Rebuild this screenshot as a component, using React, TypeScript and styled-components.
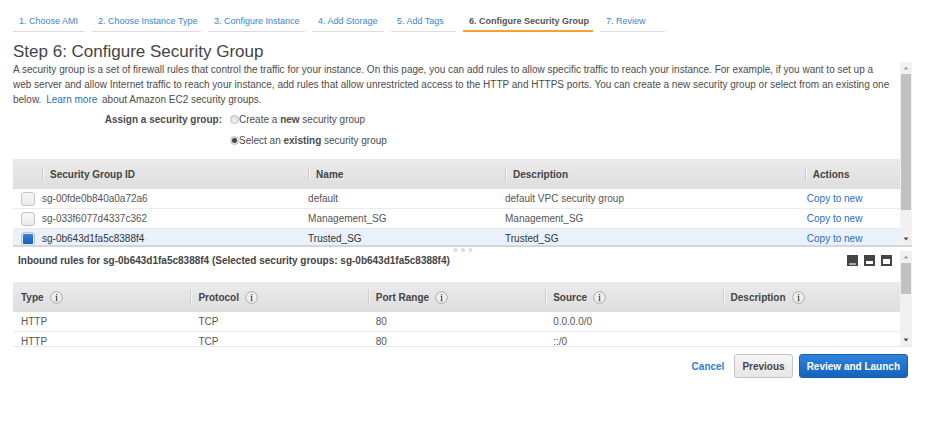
import React, { useState } from "react";
import styled, { createGlobalStyle, css } from "styled-components";

const GlobalStyle = createGlobalStyle`
  *, *::before, *::after { box-sizing: border-box; }
  body {
    margin: 0;
    background: #fff;
    color: #4c4c4c;
    font: 10px/15px "Liberation Sans", Arial, sans-serif;
  }
`;

const Page = styled.div`
  padding: 10px 21px 16px 13px;
`;

const Steps = styled.nav`
  display: flex;
  gap: 7px;
`;

const Step = styled.a<{ $active?: boolean; $width: number }>`
  flex: 0 0 ${(p) => p.$width}px;
  min-width: 0;
  height: 22px;
  padding-left: 6px;
  border-bottom: 1px solid #ddd;
  color: #3a86c8;
  font-size: 9px;
  line-height: 22px;
  text-decoration: none;
  white-space: nowrap;
  ${(p) =>
    p.$active &&
    css`
      border-bottom: 2px solid #f5a030;
      color: #555;
      font-weight: bold;
    `}
`;

const Title = styled.h1`
  margin: 9px 0 0;
  color: #444;
  font-size: 17px;
  font-weight: normal;
  line-height: 21px;
`;

const Pane = styled.section<{ $height: number; $edge: string }>`
  display: flex;
  height: ${(p) => p.$height}px;
  border-bottom: ${(p) => p.$edge};
`;

const PaneBody = styled.div`
  flex: 1;
  min-width: 0;
  overflow: hidden;
`;

const Track = styled.div`
  display: flex;
  flex: 0 0 12px;
  flex-direction: column;
  background: #f1f1f1;
`;

const ScrollButton = styled.button`
  display: flex;
  flex: 0 0 12px;
  align-items: center;
  justify-content: center;
  padding: 0;
  border: 0;
  background: none;
`;

const Thumb = styled.div<{ $height: number }>`
  height: ${(p) => p.$height}px;
  margin: 0 1px;
  background: #c1c1c1;
`;

const Spacer = styled.div`
  flex: 1;
`;

function ScrollBar({ thumb }: { thumb: number }) {
  return (
    <Track>
      <ScrollButton aria-label="Scroll up">
        <svg width="6" height="4" viewBox="0 0 6 4">
          <path d="M0.5 3.5 3 0.5 5.5 3.5z" fill="#a3a3a3" />
        </svg>
      </ScrollButton>
      <Thumb $height={thumb} />
      <Spacer />
      <ScrollButton aria-label="Scroll down">
        <svg width="6" height="4" viewBox="0 0 6 4">
          <path d="M0.5 0.5 3 3.5 5.5 0.5z" fill="#505050" />
        </svg>
      </ScrollButton>
    </Track>
  );
}

const Intro = styled.p`
  margin: 0;
`;

const Link = styled.a`
  color: #1f70c1;
  text-decoration: none;
`;

const InlineLink = styled(Link)`
  margin: 0 2px;
`;

const Assign = styled.div`
  display: grid;
  grid-template-columns: 209px 1fr;
  column-gap: 8px;
  margin: 5px 0 11px;
`;

const AssignLabel = styled.div`
  font-weight: bold;
  line-height: 15px;
  text-align: right;
`;

const Options = styled.div`
  display: grid;
  gap: 6px;
`;

const Option = styled.label`
  display: flex;
  align-items: center;
  white-space: pre;
`;

const Radio = styled.input`
  width: 9px;
  height: 9px;
  margin: 0;
  border: 1px solid #bbb;
  border-radius: 50%;
  appearance: none;
  background: linear-gradient(#ddd, #f4f4f4);
  &:checked {
    background: radial-gradient(circle, #444 0 2px, #e4e4e4 3px);
  }
`;

const Table = styled.table`
  width: 100%;
  border-collapse: separate;
  border-spacing: 0;
  table-layout: fixed;
`;

const Col = styled.col<{ $width?: string }>`
  width: ${(p) => p.$width ?? "auto"};
`;

const HeadRow = styled.tr`
  height: 30px;
  background: linear-gradient(#ebebeb, #dedede);
`;

const Head = styled.th`
  padding: 0;
  color: #444;
  font-weight: bold;
  text-align: left;
  vertical-align: middle;
`;

const HeadInner = styled.div<{ $line?: boolean }>`
  display: flex;
  align-items: center;
  gap: 6px;
  height: 14px;
  padding-left: ${(p) => (p.$line ? 7 : 8)}px;
  ${(p) =>
    p.$line &&
    css`
      border-left: 1px solid #ccc;
      box-shadow: inset 1px 0 #f6f6f6;
    `}
`;

const InfoButton = styled.button`
  display: flex;
  padding: 0;
  border: 0;
  background: none;
`;

const Row = styled.tr<{ $selected?: boolean }>`
  color: ${(p) => (p.$selected ? "#333" : "#555")};
  background: ${(p) => (p.$selected ? "#e9f1fd" : "#fff")};
`;

const Cell = styled.td<{ $indent: number }>`
  height: 20px;
  padding: 0 0 0 ${(p) => p.$indent}px;
  border-bottom: 1px solid #e9edf0;
  line-height: 14px;
  vertical-align: middle;
`;

const Check = styled.input`
  display: block;
  width: 14px;
  height: 14px;
  margin: 0;
  padding: 1px;
  border: 1px solid #c6c6c6;
  border-radius: 3px;
  appearance: none;
  background: linear-gradient(#f7f7f7, #ebebeb);
  &:checked {
    background: linear-gradient(#3184dc, #1162b8) content-box, #e6e6e6;
  }
`;

const Grip = styled.div`
  display: flex;
  justify-content: center;
  height: 4px;
  padding-top: 1px;
`;

const GripDots = styled.svg`
  overflow: visible;
`;

const RulesBar = styled.header`
  display: flex;
  align-items: flex-start;
  justify-content: space-between;
  height: 31px;
  padding: 3px 8px 0 5px;
`;

const RulesTitle = styled.h2`
  margin: 0;
  color: #444;
  font-size: 10px;
  font-weight: bold;
  line-height: 14px;
`;

const Layouts = styled.div`
  display: flex;
  gap: 6px;
  padding-top: 1px;
`;

const LayoutButton = styled.button`
  display: flex;
  padding: 0;
  border: 0;
  background: none;
`;

const Footer = styled.footer`
  display: flex;
  align-items: center;
  justify-content: flex-end;
  gap: 6px;
  padding: 7px 4px 0 0;
`;

const Cancel = styled.a`
  margin-right: 4px;
  color: #2a7fd4;
  font-weight: bold;
  text-decoration: none;
`;

const Button = styled.button<{ $primary?: boolean }>`
  height: 24px;
  padding: 0 7px;
  border: 1px solid ${(p) => (p.$primary ? "#1560ae" : "#c4c4c4")};
  border-radius: 3px;
  background: ${(p) =>
    p.$primary ? "linear-gradient(#2f83da, #1463ba)" : "linear-gradient(#f6f6f6, #e6e6e6)"};
  color: ${(p) => (p.$primary ? "#fff" : "#444")};
  font: bold 10px "Liberation Sans", Arial, sans-serif;
  white-space: nowrap;
`;

function Info({ about }: { about: string }) {
  return (
    <InfoButton aria-label={`About ${about}`}>
      <svg width="13" height="13" viewBox="0 0 13 13" fill="none">
        <circle cx="6.5" cy="6.5" r="5.8" fill="#efefef" stroke="#aaa" />
        <path d="M5.4 5.3h1.1v4.4M5.4 9.7h2.2" stroke="#666" strokeWidth="0.8" />
        <rect x="6" y="5" width="1.2" height="5" fill="#555" />
        <rect x="6" y="3" width="1.2" height="1.2" fill="#555" />
      </svg>
    </InfoButton>
  );
}

const steps = [
  { label: "1. Choose AMI", width: 72 },
  { label: "2. Choose Instance Type", width: 109 },
  { label: "3. Configure Instance", width: 97 },
  { label: "4. Add Storage", width: 72 },
  { label: "5. Add Tags", width: 65 },
  { label: "6. Configure Security Group", width: 130 },
  { label: "7. Review", width: 65 },
];

const groups = [
  { id: "sg-00fde0b840a0a72a6", name: "default", description: "default VPC security group" },
  { id: "sg-033f6077d4337c362", name: "Management_SG", description: "Management_SG" },
  { id: "sg-0b643d1fa5c8388f4", name: "Trusted_SG", description: "Trusted_SG" },
];

const ruleColumns = ["Type", "Protocol", "Port Range", "Source", "Description"];

const rules = [
  ["HTTP", "TCP", "80", "0.0.0.0/0", ""],
  ["HTTP", "TCP", "80", "::/0", ""],
];

const layouts = [
  { name: "Collapse rules", y: 8, height: 2, fill: "#aaa" },
  { name: "Split view", y: 6, height: 3, fill: "#fff" },
  { name: "Expand rules", y: 4, height: 5, fill: "#fff" },
];

export default function App() {
  const [selected, setSelected] = useState(groups[2].id);
  return (
    <>
      <GlobalStyle />
      <Page>
        <Steps aria-label="Launch steps">
          {steps.map((s, i) => (
            <Step key={s.label} href="#" $width={s.width} $active={i === 5}>
              {s.label}
            </Step>
          ))}
        </Steps>
        <Title>Step 6: Configure Security Group</Title>
        <Pane $height={185} $edge="2px solid #d3d7dc">
          <PaneBody>
            <Intro>
              A security group is a set of firewall rules that control the traffic for your instance. On this page, you
              can add rules to allow specific traffic to reach your instance. For example, if you want to set up a
              <br />
              web server and allow Internet traffic to reach your instance, add rules that allow unrestricted access to
              the HTTP and HTTPS ports. You can create a new security group or select from an existing one below.{" "}
              <InlineLink href="#">Learn more</InlineLink> about Amazon EC2 security groups.
            </Intro>
            <Assign role="radiogroup" aria-labelledby="assign">
              <AssignLabel id="assign">Assign a security group:</AssignLabel>
              <Options>
                <Option>
                  <Radio type="radio" name="assign" />
                  Create a <b>new</b> security group
                </Option>
                <Option>
                  <Radio type="radio" name="assign" defaultChecked />
                  Select an <b>existing</b> security group
                </Option>
              </Options>
            </Assign>
            <Table>
              <colgroup>
                <Col $width="29px" />
                <Col $width="30%" />
                <Col $width="22.2%" />
                <Col $width="33.8%" />
                <Col />
              </colgroup>
              <thead>
                <HeadRow>
                  <Head />
                  {["Security Group ID", "Name", "Description", "Actions"].map((h) => (
                    <Head key={h}>
                      <HeadInner $line>{h}</HeadInner>
                    </Head>
                  ))}
                </HeadRow>
              </thead>
              <tbody>
                {groups.map((g) => (
                  <Row key={g.id} $selected={g.id === selected}>
                    <Cell $indent={8}>
                      <Check
                        type="checkbox"
                        aria-label={g.id}
                        checked={g.id === selected}
                        onChange={() => setSelected(g.id)}
                      />
                    </Cell>
                    <Cell $indent={0}>{g.id}</Cell>
                    <Cell $indent={0}>{g.name}</Cell>
                    <Cell $indent={0}>{g.description}</Cell>
                    <Cell $indent={2}>
                      <Link href="#">Copy to new</Link>
                    </Cell>
                  </Row>
                ))}
              </tbody>
            </Table>
          </PaneBody>
          <ScrollBar thumb={136} />
        </Pane>
        <Grip>
          <GripDots width="20" height="4" viewBox="0 0 20 4" fill="#f4f4f4" stroke="#ccc">
            <circle cx="2.5" cy="2" r="1.4" />
            <circle cx="10" cy="2" r="1.4" />
            <circle cx="17.5" cy="2" r="1.4" />
          </GripDots>
        </Grip>
        <Pane $height={96} $edge="1px solid #e8e8e8">
          <PaneBody>
            <RulesBar>
              <RulesTitle>
                Inbound rules for sg-0b643d1fa5c8388f4 (Selected security groups: sg-0b643d1fa5c8388f4)
              </RulesTitle>
              <Layouts>
                {layouts.map((l) => (
                  <LayoutButton key={l.name} aria-label={l.name}>
                    <svg width="11" height="11" viewBox="0 0 11 11">
                      <rect width="11" height="11" fill="#444" />
                      <rect x="2" y={l.y} width="7" height={l.height} fill={l.fill} />
                    </svg>
                  </LayoutButton>
                ))}
              </Layouts>
            </RulesBar>
            <Table>
              <thead>
                <HeadRow>
                  {ruleColumns.map((c, i) => (
                    <Head key={c}>
                      <HeadInner $line={i > 0}>
                        {c}
                        <Info about={c} />
                      </HeadInner>
                    </Head>
                  ))}
                </HeadRow>
              </thead>
              <tbody>
                {rules.map((r, i) => (
                  <Row key={i}>
                    {r.map((value, j) => (
                      <Cell key={j} $indent={8}>
                        {value}
                      </Cell>
                    ))}
                  </Row>
                ))}
              </tbody>
            </Table>
          </PaneBody>
          <ScrollBar thumb={31} />
        </Pane>
        <Footer>
          <Cancel href="#">Cancel</Cancel>
          <Button>Previous</Button>
          <Button $primary>Review and Launch</Button>
        </Footer>
      </Page>
    </>
  );
}
